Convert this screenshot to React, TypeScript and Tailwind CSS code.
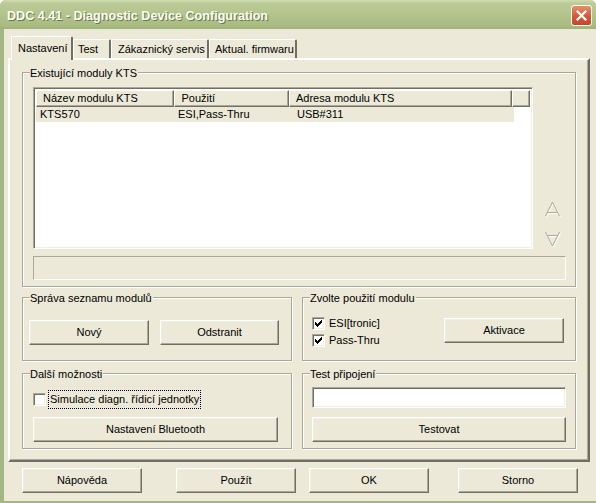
import type { ReactNode } from 'react';

// Classic Win32 controls painted with the XP olive scheme system colours
const RAISED =
  'bg-[#ece9d8] border border-t-white border-l-white border-r-[#716f64] border-b-[#716f64] shadow-[inset_-1px_-1px_0_#aca899,inset_1px_1px_0_#f1efe2]';
const SUNKEN =
  'border border-t-[#aca899] border-l-[#aca899] border-r-white border-b-white shadow-[inset_1px_1px_0_#716f64,inset_-1px_-1px_0_#f1efe2]';

const TABS = [
  { label: 'Nastavení', w: 'w-[62px]', pl: 'pl-[6px]', active: true },
  { label: 'Test', w: 'w-[38px]', pl: 'pl-[4px]', active: false },
  { label: 'Zákaznický servis', w: 'w-[98px]', pl: 'pl-[6px]', active: false },
  { label: 'Aktual. firmwaru', w: 'w-[88px]', pl: 'pl-[5px]', active: false },
];

const CHECK_PIXELS = [
  [6, 0], [5, 1], [6, 1], [0, 2], [4, 2], [5, 2], [6, 2],
  [0, 3], [1, 3], [3, 3], [4, 3], [5, 3],
  [0, 4], [1, 4], [2, 4], [3, 4], [4, 4],
  [1, 5], [2, 5], [3, 5], [2, 6],
];

function Button({ label, className = '' }: { label: string; className?: string }) {
  return (
    <button
      type="button"
      className={`${RAISED} h-[25px] flex items-center justify-center text-[11px] text-black ${className}`}
    >
      {label}
    </button>
  );
}

function Group({ title, className = '', children }: { title: string; className?: string; children?: ReactNode }) {
  return (
    <div className={`relative border border-[#aca899] shadow-[inset_1px_1px_0_#fff,1px_1px_0_#fff] ${className}`}>
      <span className="absolute left-[7px] top-[-7px] bg-[#ece9d8] pr-[1px] leading-[14px]">{title}</span>
      {children}
    </div>
  );
}

function Checkbox({ checked }: { checked: boolean }) {
  return (
    <span className={`${SUNKEN} w-[13px] h-[13px] bg-white flex items-center justify-center shrink-0`}>
      {checked && (
        <svg width="7" height="7" viewBox="0 0 7 7" shapeRendering="crispEdges">
          {CHECK_PIXELS.map(([x, y]) => (
            <rect key={`${x}-${y}`} x={x} y={y} width="1" height="1" fill="#000" />
          ))}
        </svg>
      )}
    </span>
  );
}

function Arrow({ down }: { down?: boolean }) {
  const d = down ? 'M1.5 1 L8.5 15 L15.5 1 M3.5 4.5 H13.5' : 'M1.5 15 L8.5 1 L15.5 15 M3.5 11.5 H13.5';
  return (
    <svg width="18" height="17" viewBox="0 0 18 17" fill="none">
      <path d={d} stroke="#ffffff" strokeWidth="1" transform="translate(1 1)" />
      <path d={d} stroke="#aca899" strokeWidth="1" />
    </svg>
  );
}

function ListView() {
  return (
    <div className={`${SUNKEN} bg-white w-[500px] h-[162px] p-[2px] flex flex-col`}>
      <div className="flex h-[17px]">
        {[
          { t: 'Název modulu KTS', w: 'w-[139px]' },
          { t: 'Použití', w: 'w-[115px]' },
          { t: 'Adresa modulu KTS', w: 'w-[224px]' },
          { t: '', w: 'w-[18px]' },
        ].map((c, i) => (
          <div
            key={i}
            className={`${c.w} h-[17px] bg-[#ece9d8] border-t border-l border-t-white border-l-white border-r border-b border-r-[#716f64] border-b-[#716f64] shadow-[inset_-1px_-1px_0_#aca899] pl-[6px] flex items-center leading-none`}
          >
            {c.t}
          </div>
        ))}
      </div>
      <div className="flex h-[15px] w-[478px] bg-[#ece9d8] items-center">
        <span className="w-[139px] pl-[4px]">KTS570</span>
        <span className="w-[115px] pl-[3px]">ESI,Pass-Thru</span>
        <span className="w-[224px] pl-[7px]">USB#311</span>
      </div>
    </div>
  );
}

export default function App() {
  return (
    <div className="w-[596px] h-[503px] bg-[#a2b783] rounded-t-[6px] flex flex-col overflow-hidden font-['Liberation_Sans',Arial,sans-serif] text-[11px] text-black">
      {/* Title bar */}
      <div className="h-[29px] shrink-0 bg-[linear-gradient(to_bottom,#d3ddb3_0px,#bccb98_3px,#b3c48c_14px,#a8bb80_26px,#9db378_29px)] flex items-center pl-[7px] pr-[4px]">
        <span className="mt-[3px] text-[12.6px] font-bold text-[#fbfbf2] [text-shadow:1px_1px_0_#6b7a4e]">
          DDC 4.41 - Diagnostic Device Configuration
        </span>
        <div className="ml-auto mt-[1px] w-[21px] h-[21px] rounded-[3px] border border-white bg-[linear-gradient(to_bottom,#e8906d,#d05a35_55%,#c2482a)] flex items-center justify-center">
          <svg width="11" height="11" viewBox="0 0 11 11">
            <path d="M1.5 1.5 L9.5 9.5 M9.5 1.5 L1.5 9.5" stroke="#fff" strokeWidth="2.2" strokeLinecap="square" />
          </svg>
        </div>
      </div>

      {/* Client area */}
      <div className="ml-[4px] mb-[2px] flex-1 bg-[#ece9d8] pt-[7px] flex flex-col">
        {/* Tabs */}
        <div className="flex items-end h-[22px] pl-[7px]">
          {TABS.map((t) =>
            t.active ? (
              <div
                key={t.label}
                className={`${t.w} ${t.pl} relative z-10 -mb-[2px] h-[24px] bg-[#ece9d8] border-t border-l border-t-white border-l-white border-r-2 border-r-[#716f64] rounded-tr-[2px] flex items-center`}
              >
                {t.label}
              </div>
            ) : (
              <div
                key={t.label}
                className={`${t.w} ${t.pl} h-[19px] border-t border-l border-t-white border-l-white border-r-2 border-r-[#716f64] rounded-tr-[2px] flex items-center`}
              >
                {t.label}
              </div>
            ),
          )}
        </div>

        {/* Tab panel */}
        <div className="ml-[4px] w-[582px] h-[404px] border-2 border-t-white border-l-white border-r-[#716f64] border-b-[#716f64] shadow-[inset_-1px_-1px_0_#aca899] pl-[12px] pt-[12px] flex flex-col">
          <Group title="Existující moduly KTS" className="w-[554px] h-[215px] pl-[10px] pt-[14px]">
            <div className="flex">
              <ListView />
              <div className="ml-[11px] h-[162px] flex flex-col justify-end pb-[1px] gap-[13px]">
                <Arrow />
                <Arrow down />
              </div>
            </div>
            <div className="mt-[7px] w-[533px] h-[24px] border border-t-[#aca899] border-l-[#aca899] border-r-white border-b-white" />
          </Group>

          <div className="mt-[10px] flex gap-[10px]">
            <Group title="Správa seznamu modulů" className="w-[270px] h-[64px] pl-[6px] pt-[22px] flex gap-[11px]">
              <Button label="Nový" className="w-[120px]" />
              <Button label="Odstranit" className="w-[119px]" />
            </Group>
            <Group title="Zvolte použití modulu" className="w-[274px] h-[64px] pl-[9px] pr-[11px] pt-[17px] flex items-start">
              <div className="flex flex-col">
                <label className="h-[17px] flex items-center gap-[4px]">
                  <Checkbox checked />
                  <span>ESI[tronic]</span>
                </label>
                <label className="h-[17px] flex items-center gap-[4px]">
                  <Checkbox checked />
                  <span>Pass-Thru</span>
                </label>
              </div>
              <Button label="Aktivace" className="ml-auto mt-[3px] w-[120px]" />
            </Group>
          </div>

          <div className="mt-[12px] flex gap-[10px]">
            <Group title="Další možnosti" className="w-[270px] h-[76px] pl-[10px] pt-[16px]">
              <label className="h-[19px] flex items-center">
                <Checkbox checked={false} />
                <span className="ml-[2px] px-[1px] h-[19px] flex items-center border border-dotted border-black">
                  Simulace diagn. řídicí jednotky
                </span>
              </label>
              <Button label="Nastavení Bluetooth" className="mt-[8px] w-[245px]" />
            </Group>
            <Group title="Test připojení" className="w-[274px] h-[76px] pl-[9px] pt-[13px]">
              <div className={`${SUNKEN} bg-white w-[254px] h-[21px]`} />
              <Button label="Testovat" className="mt-[9px] w-[254px]" />
            </Group>
          </div>
        </div>

        {/* Dialog buttons */}
        <div className="mt-[6px] flex">
          <Button label="Nápověda" className="ml-[18px] w-[120px]" />
          <Button label="Použít" className="ml-[34px] w-[120px]" />
          <Button label="OK" className="ml-[13px] w-[120px]" />
          <Button label="Storno" className="ml-[29px] w-[120px]" />
        </div>
      </div>
    </div>
  );
}
